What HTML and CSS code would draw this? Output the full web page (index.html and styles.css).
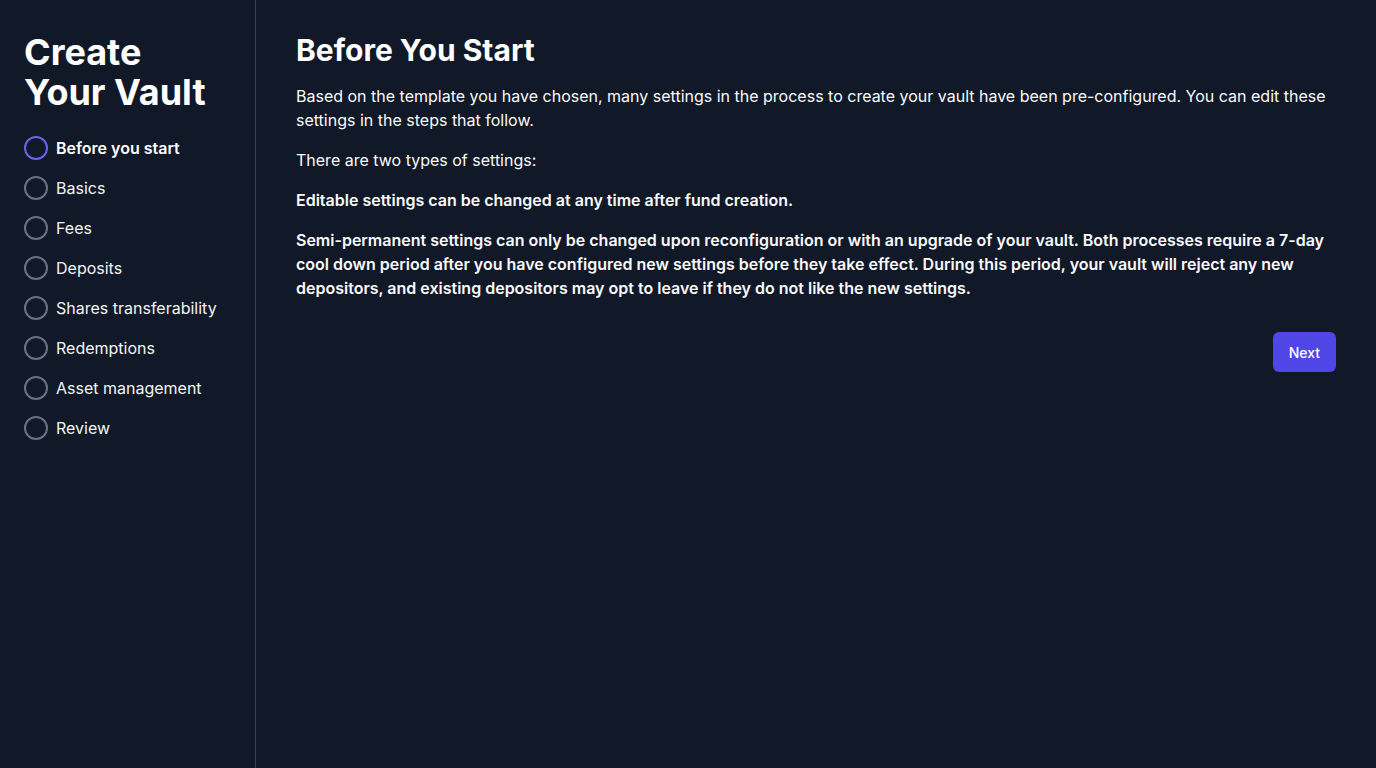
FILE: index.html
```html
<!DOCTYPE html>
<html lang="en">
<head>
<meta charset="utf-8">
<title>Create Your Vault</title>
<link rel="stylesheet" href="styles.css">
</head>
<body>
<div class="layout">
  <aside class="sidebar">
    <h1 class="sidebar-title">Create<br>Your Vault</h1>
    <ol class="steps">
      <li class="step active"><span class="dot"></span><span>Before you start</span></li>
      <li class="step"><span class="dot"></span><span>Basics</span></li>
      <li class="step"><span class="dot"></span><span>Fees</span></li>
      <li class="step"><span class="dot"></span><span>Deposits</span></li>
      <li class="step"><span class="dot"></span><span>Shares transferability</span></li>
      <li class="step"><span class="dot"></span><span>Redemptions</span></li>
      <li class="step"><span class="dot"></span><span>Asset management</span></li>
      <li class="step"><span class="dot"></span><span>Review</span></li>
    </ol>
  </aside>
  <main class="main">
    <h2 class="title">Before You Start</h2>
    <p>Based on the template you have chosen, many settings in the process to create your vault have been pre-configured. You can edit these settings in the steps that follow.</p>
    <p>There are two types of settings:</p>
    <p class="strong">Editable settings can be changed at any time after fund creation.</p>
    <p class="strong">Semi-permanent settings can only be changed upon reconfiguration or with an upgrade of your vault. Both processes require a 7-day cool down period after you have configured new settings before they take effect. During this period, your vault will reject any new depositors, and existing depositors may opt to leave if they do not like the new settings.</p>
    <div class="actions">
      <button class="btn">Next</button>
    </div>
  </main>
</div>
</body>
</html>
```
FILE: styles.css
```css
* { box-sizing: border-box; }
html, body {
  margin: 0;
  padding: 0;
  background: #111827;
  color: #f9fafb;
  font-family: Inter, "Noto Sans", sans-serif;
  font-size: 16px;
  line-height: 24px;
}
.layout {
  display: flex;
  min-height: 768px;
}
.sidebar {
  width: 256px;
  flex: 0 0 256px;
  border-right: 1px solid #374151;
  padding: 32px 24px;
}
.sidebar-title {
  margin: 0 0 24px;
  font-size: 36px;
  line-height: 40px;
  font-weight: 700;
  color: #ffffff;
}
.steps {
  list-style: none;
  margin: 0;
  padding: 0;
  display: flex;
  flex-direction: column;
  gap: 16px;
}
.step {
  display: flex;
  align-items: center;
  gap: 8px;
  height: 24px;
  color: #f3f4f6;
}
.dot {
  width: 24px;
  height: 24px;
  border-radius: 50%;
  border: 2px solid #6b7280;
  flex: 0 0 24px;
}
.step.active { font-weight: 600; color: #ffffff; }
.step.active .dot { border-color: #6366f1; }
.main {
  flex: 1;
  padding: 32px 40px;
}
.title {
  margin: 0 0 16px;
  font-size: 30px;
  line-height: 36px;
  font-weight: 700;
  color: #ffffff;
}
.main p {
  margin: 0 0 16px;
}
.main p.strong { font-weight: 600; }
.actions {
  display: flex;
  justify-content: flex-end;
  margin-top: 32px;
}
.btn {
  background: #4f46e5;
  color: #ffffff;
  border: none;
  border-radius: 6px;
  height: 40px;
  padding: 0 16px;
  font-family: Inter, "Noto Sans", sans-serif;
  font-size: 14px;
  font-weight: 500;
}
```
